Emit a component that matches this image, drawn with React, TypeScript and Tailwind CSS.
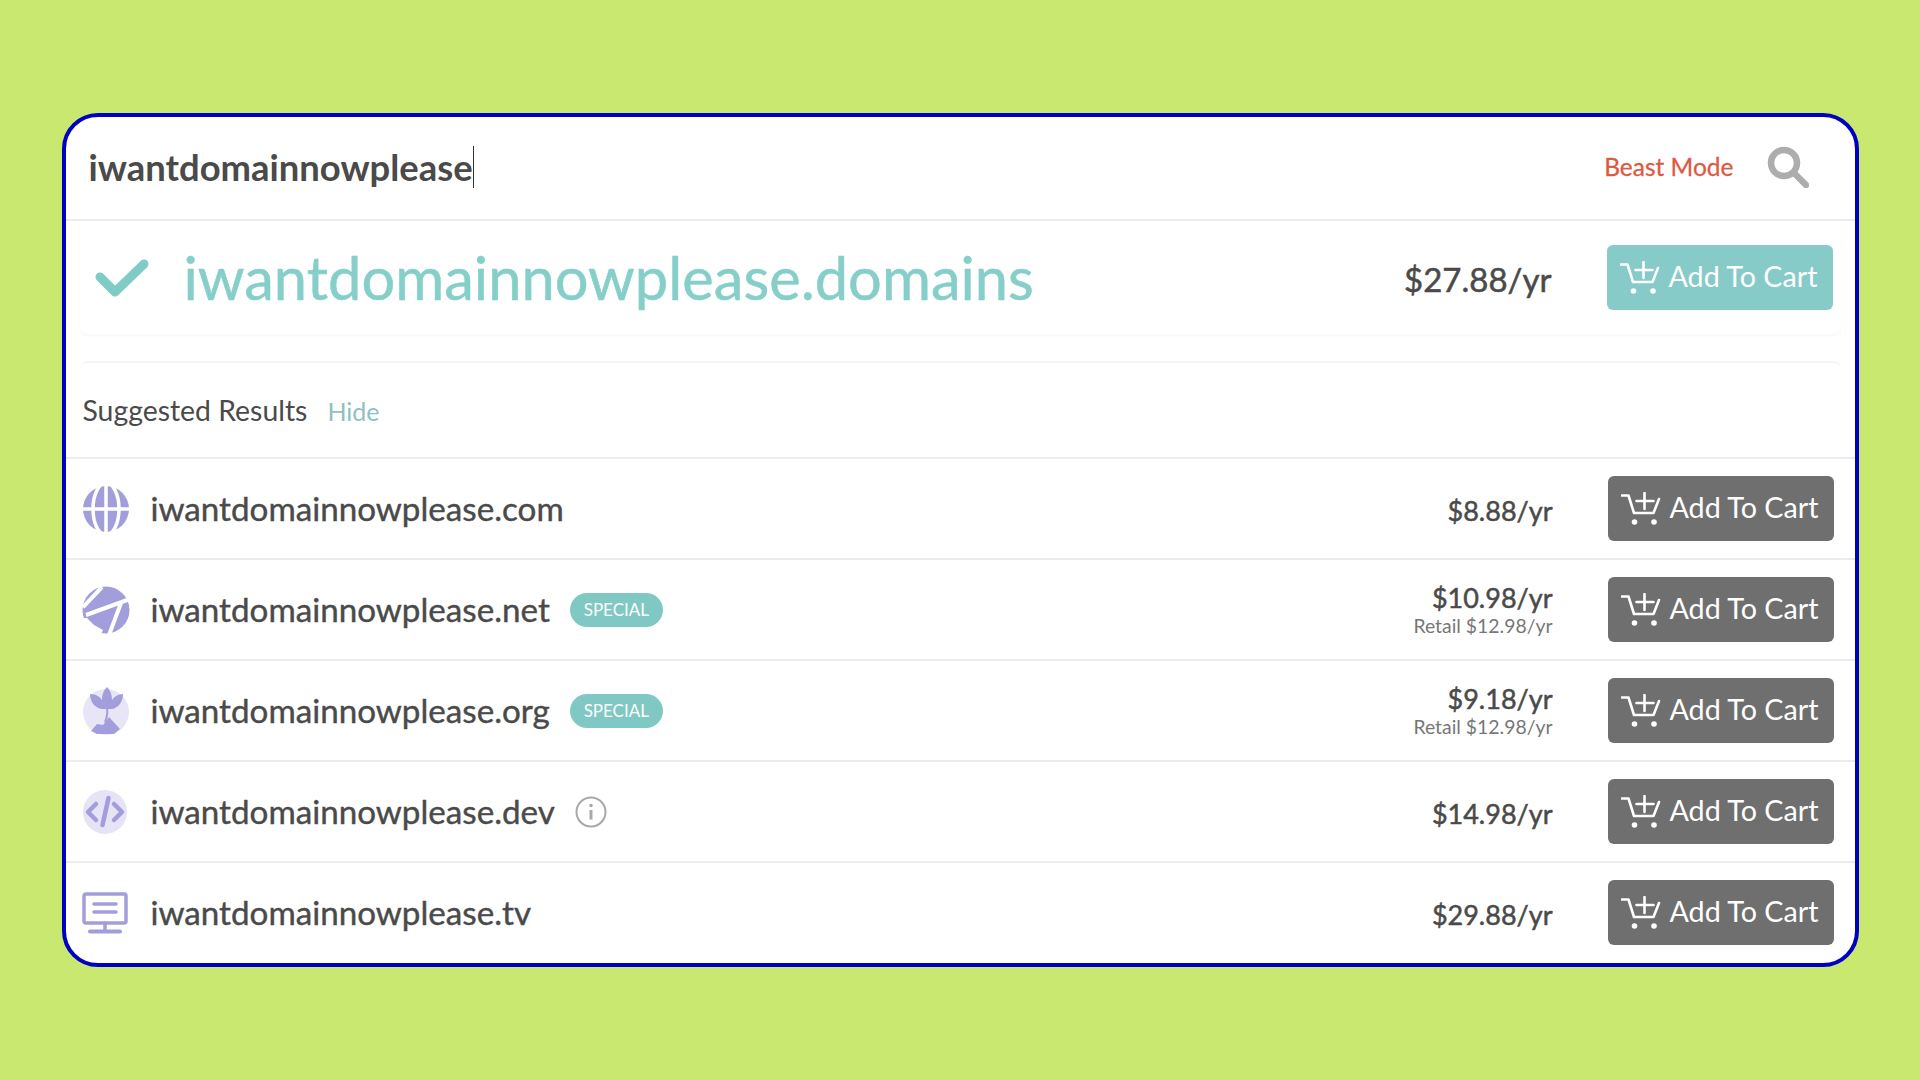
import type { FC, ReactNode } from "react";

const PURPLE = "#a29edb";

const CartIcon: FC = () => (
  <svg width="40" height="34" viewBox="0 0 40 34" fill="none" stroke="currentColor" strokeWidth="2.6" strokeLinecap="round" strokeLinejoin="round">
    <path d="M1 3.5h6.5L13 21h19.5L38 7" />
    <path d="M23.5 1v16M15.5 9h17" />
    <circle cx="13.5" cy="30" r="2.8" fill="currentColor" stroke="none" />
    <circle cx="33" cy="30" r="2.8" fill="currentColor" stroke="none" />
  </svg>
);

const GlobeIcon: FC = () => (
  <svg width="48" height="48" viewBox="0 0 48 48" fill={PURPLE}>
    <circle cx="24" cy="24" r="23" />
    <g fill="none" stroke="#fff" strokeWidth="3.5">
      <path d="M0 24h48M24 0v48" />
      <ellipse cx="24" cy="24" rx="13" ry="26" />
    </g>
  </svg>
);

const NetIcon: FC = () => (
  <svg width="48" height="48" viewBox="0 0 48 48" fill="none">
    <circle cx="24" cy="24" r="23.5" fill={PURPLE} />
    <path d="M1 21L20 1M4 29L48 13M39 17L27 49" stroke="#fff" strokeWidth="4" />
    <path d="M0 32h5l7 7 9 5-2 4H0z" fill="#fff" />
  </svg>
);

const OrgIcon: FC = () => (
  <svg width="48" height="48" viewBox="0 0 48 48" fill="none">
    <circle cx="24" cy="25" r="23" fill="#e7e5f6" />
    <path d="M8 7c6 0 10 3 12 6 0-6 2-10 5-13 3 3 5 7 5 13 2-3 6-6 11-6 0 8-5 14-11 15h-10C13 21 8 15 8 7z" fill={PURPLE} />
    <path d="M25 21c1 5 0 9-2 14" stroke={PURPLE} strokeWidth="2" />
    <path d="M9 44l6-7 6 1 6-8 11 12-6 5H15z" fill={PURPLE} />
  </svg>
);

const DevIcon: FC = () => (
  <svg width="46" height="46" viewBox="0 0 46 46" fill="none">
    <circle cx="23" cy="23" r="22" fill="#e5e3f5" />
    <path d="M14 15l-8 8 8 8M32 15l8 8-8 8M26.5 9l-6 27" stroke={PURPLE} strokeWidth="4.5" strokeLinecap="round" strokeLinejoin="round" />
  </svg>
);

const TvIcon: FC = () => (
  <svg width="46" height="42" viewBox="0 0 46 42" fill="none" stroke={PURPLE} strokeLinecap="round">
    <rect x="2" y="2" width="42" height="29" rx="2" strokeWidth="3.5" />
    <path d="M12 12h22M12 20h22" strokeWidth="3.5" />
    <path d="M23 31v8" strokeWidth="3.5" />
    <path d="M8 39.5h30" strokeWidth="4" />
  </svg>
);

const InfoIcon: FC = () => (
  <svg width="32" height="32" viewBox="0 0 32 32" fill="none" stroke="#a8a8a8">
    <circle cx="16" cy="16" r="14.5" strokeWidth="2" />
    <path d="M16 14v9.5" strokeWidth="3" />
    <circle cx="16" cy="9.5" r="1.8" fill="#a8a8a8" stroke="none" />
  </svg>
);

const AddButton: FC<{ teal?: boolean }> = ({ teal }) => (
  <button
    className={`flex h-[65px] w-[226px] shrink-0 items-center gap-[9px] rounded-[6px] pl-[13px] text-[28.7px] text-white ${
      teal ? "bg-[#86cbc8]" : "bg-[#6f6f6f]"
    }`}
  >
    <CartIcon />
    <span className="pb-[1px]">Add To Cart</span>
  </button>
);

const Special: FC = () => (
  <span className="ml-[20px] flex h-[34px] w-[93px] items-center justify-center rounded-full bg-[#7fc8c3] text-[17px] text-white">
    SPECIAL
  </span>
);

interface RowData {
  name: string;
  price: string;
  icon: ReactNode;
  retail?: boolean;
  extra?: ReactNode;
}

const rows: RowData[] = [
  { name: "iwantdomainnowplease.com", price: "$8.88/yr", icon: <GlobeIcon /> },
  { name: "iwantdomainnowplease.net", price: "$10.98/yr", icon: <NetIcon />, retail: true, extra: <Special /> },
  { name: "iwantdomainnowplease.org", price: "$9.18/yr", icon: <OrgIcon />, retail: true, extra: <Special /> },
  {
    name: "iwantdomainnowplease.dev",
    price: "$14.98/yr",
    icon: <DevIcon />,
    extra: (
      <span className="ml-[20px]">
        <InfoIcon />
      </span>
    ),
  },
  { name: "iwantdomainnowplease.tv", price: "$29.88/yr", icon: <TvIcon /> },
];

export default function App() {
  return (
    <div className="flex h-[1080px] w-[1920px] items-start justify-center bg-[#c8e86f] pt-[113px] font-['Lato',sans-serif] text-[#4a4a4a]">
      <div className="flex h-[854px] w-[1797px] flex-col overflow-hidden rounded-[36px] border-[4px] border-[#0000c4] bg-white">
        <div className="flex h-[104px] shrink-0 items-center border-b-2 border-[#ececec] pl-[23px] pr-[46px]">
          <span className="mb-[3px] border-r-[1.5px] border-[#333] text-[36.4px] leading-[42px] font-bold">iwantdomainnowplease</span>
          <span className="mb-[2px] ml-auto text-[24.5px] text-[#dd5a42] [-webkit-text-stroke:0.3px]">Beast Mode</span>
          <svg className="mb-[2px] ml-[33px]" width="42" height="42" viewBox="0 0 42 42" fill="none" stroke="#adadad" strokeLinecap="round">
            <circle cx="17" cy="17" r="13" strokeWidth="6.5" />
            <path d="M27 27l12 12" strokeWidth="6.5" />
          </svg>
        </div>

        <div className="mx-[14px] flex h-[113px] shrink-0 items-center rounded-b-lg pr-[8px] shadow-[0_2px_3px_rgba(0,0,0,0.03)]">
          <svg className="ml-[15px]" width="54" height="40" viewBox="0 0 54 40" fill="none">
            <path d="M5 19l15 15L49 6" stroke="#7fcbc6" strokeWidth="9" strokeLinecap="round" strokeLinejoin="round" />
          </svg>
          <span className="ml-[35px] text-[59.6px] leading-none text-[#86cfc9] [-webkit-text-stroke:0.5px]">iwantdomainnowplease.domains</span>
          <span className="mt-[5px] mr-[55px] ml-auto text-[33px] [-webkit-text-stroke:0.5px]">$27.88/yr</span>
          <AddButton teal />
        </div>

        <div className="mx-[14px] mt-[27px] flex h-[96px] shrink-0 items-center rounded-t-lg border-t-2 border-[#f5f5f5]">
          <span className="ml-[3px] text-[28.4px]">Suggested Results</span>
          <span className="mt-1 ml-[20px] text-[25px] text-[#8fbfc0]">Hide</span>
        </div>

        {rows.map((row) => (
          <div key={row.name} className="flex h-[101px] shrink-0 items-center border-t-2 border-[#ececec] pr-[21px] pl-[16px]">
            <span className="flex w-[69px] shrink-0 justify-start">{row.icon}</span>
            <span className="text-[33.2px] [-webkit-text-stroke:0.4px]">{row.name}</span>
            {row.extra}
            <div className={`mr-[55px] ml-auto flex flex-col items-end ${row.retail ? "" : "mt-[5px]"}`}>
              <span className="text-[27px] leading-[32px] [-webkit-text-stroke:0.5px]">{row.price}</span>
              {row.retail && <span className="text-[19.4px] leading-[24px] text-[#777]">Retail $12.98/yr</span>}
            </div>
            <AddButton />
          </div>
        ))}
      </div>
    </div>
  );
}
